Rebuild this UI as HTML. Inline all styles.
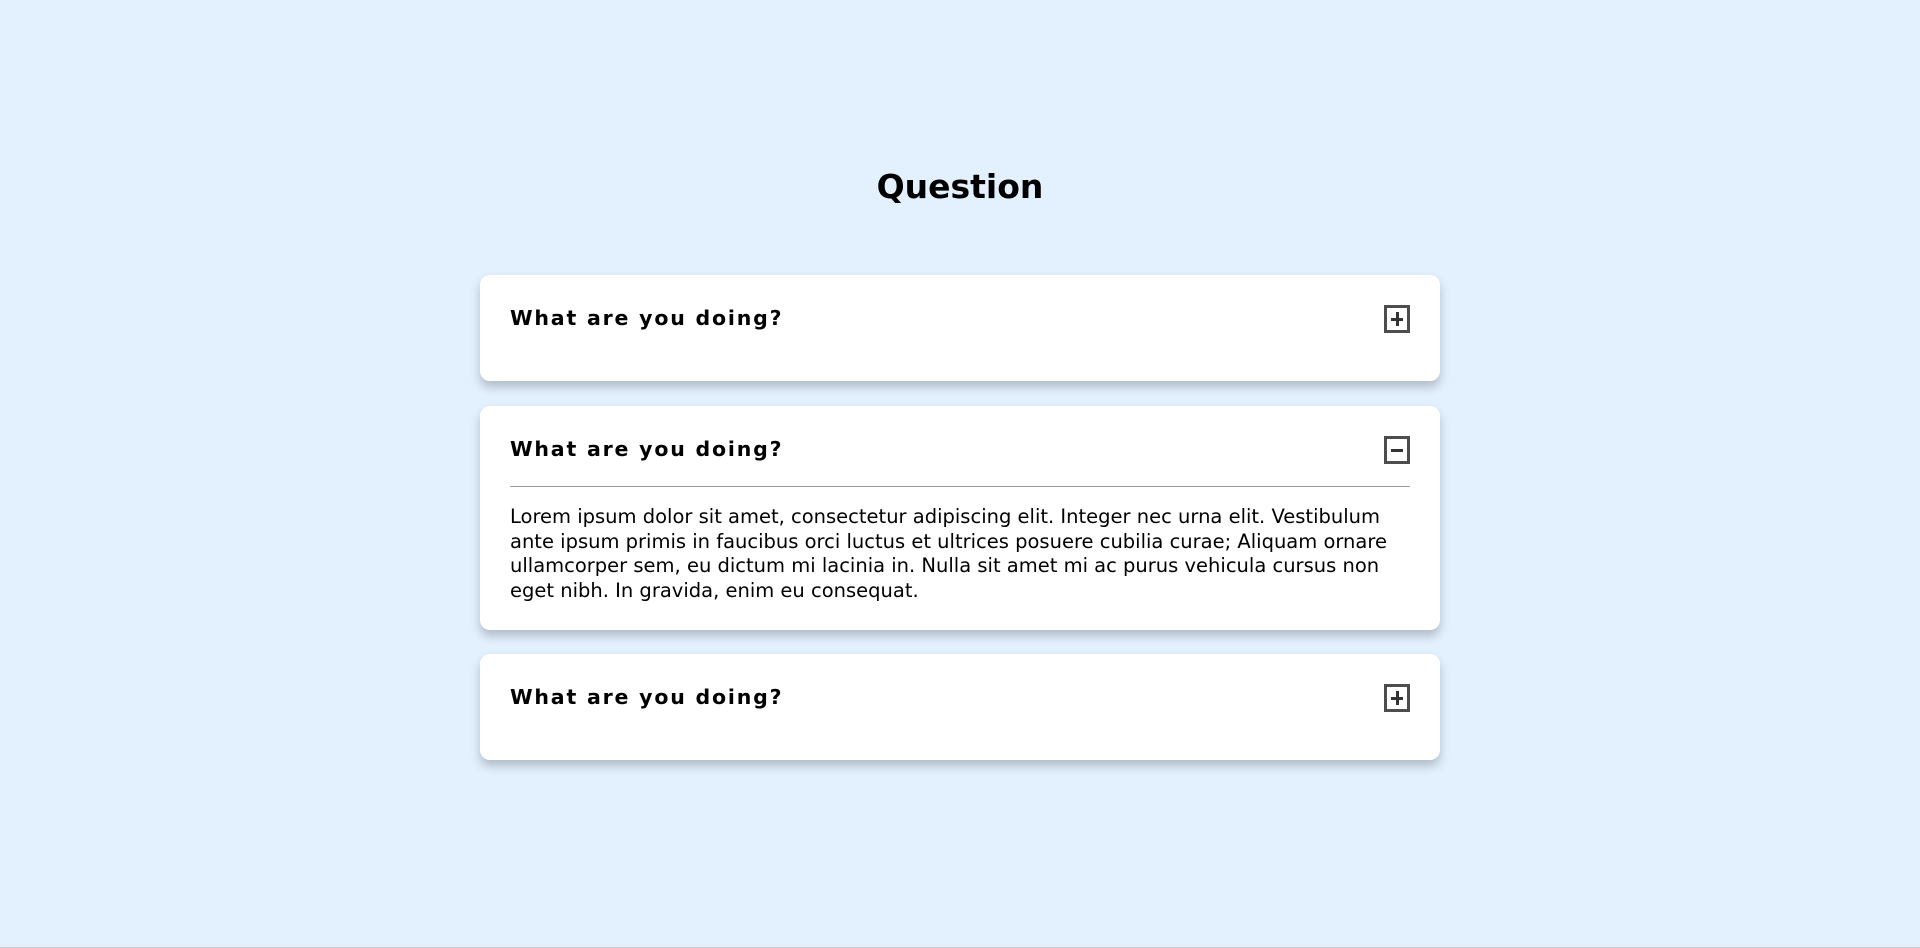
<!DOCTYPE html>
<html><head><style>
html,body{margin:0;padding:0}
body{width:1920px;height:948px;background:#e3f0fe;font-family:"DejaVu Sans","Liberation Sans",sans-serif;position:relative;overflow:hidden;border-bottom:1px solid #ccc;box-sizing:border-box}
h1{position:absolute;top:163px;left:0;width:1920px;text-align:center;margin:0;font-size:33px;font-weight:bold;color:#000;line-height:48px}
.card{position:absolute;left:480px;width:960px;background:#fff;border-radius:10px;box-shadow:0 6px 10px rgba(0,0,0,0.22);box-sizing:border-box;padding:0 30px}
.q{position:absolute;left:30px;top:29px;font-size:20.5px;font-weight:bold;letter-spacing:1.8px;line-height:28px;color:#000}
.ic{position:absolute;right:30px;top:30px;width:26px;height:28px;box-sizing:border-box;border:3px solid #4d4d4d}
.ic:before{content:"";position:absolute;left:4px;right:4px;top:10px;height:3px;background:#333}
.ic.p:after{content:"";position:absolute;top:4px;bottom:4px;left:9px;width:3px;background:#333}
hr{position:absolute;left:30px;right:30px;top:80px;margin:0;border:0;border-top:1px solid #999}
.t{position:absolute;left:30px;right:30px;top:99px;font-size:19.5px;line-height:24.5px;color:#000}
</style></head><body>
<h1>Question</h1>
<div class="card" style="top:275px;height:106px"><div class="q">What are you doing?</div><div class="ic p"></div></div>
<div class="card" style="top:406px;height:224px"><div class="q">What are you doing?</div><div class="ic"></div><hr>
<div class="t">Lorem ipsum dolor sit amet, consectetur adipiscing elit. Integer nec urna elit. Vestibulum ante ipsum primis in faucibus orci luctus et ultrices posuere cubilia curae; Aliquam ornare ullamcorper sem, eu dictum mi lacinia in. Nulla sit amet mi ac purus vehicula cursus non eget nibh. In gravida, enim eu consequat.</div></div>
<div class="card" style="top:654px;height:106px"><div class="q">What are you doing?</div><div class="ic p"></div></div>
</body></html>
